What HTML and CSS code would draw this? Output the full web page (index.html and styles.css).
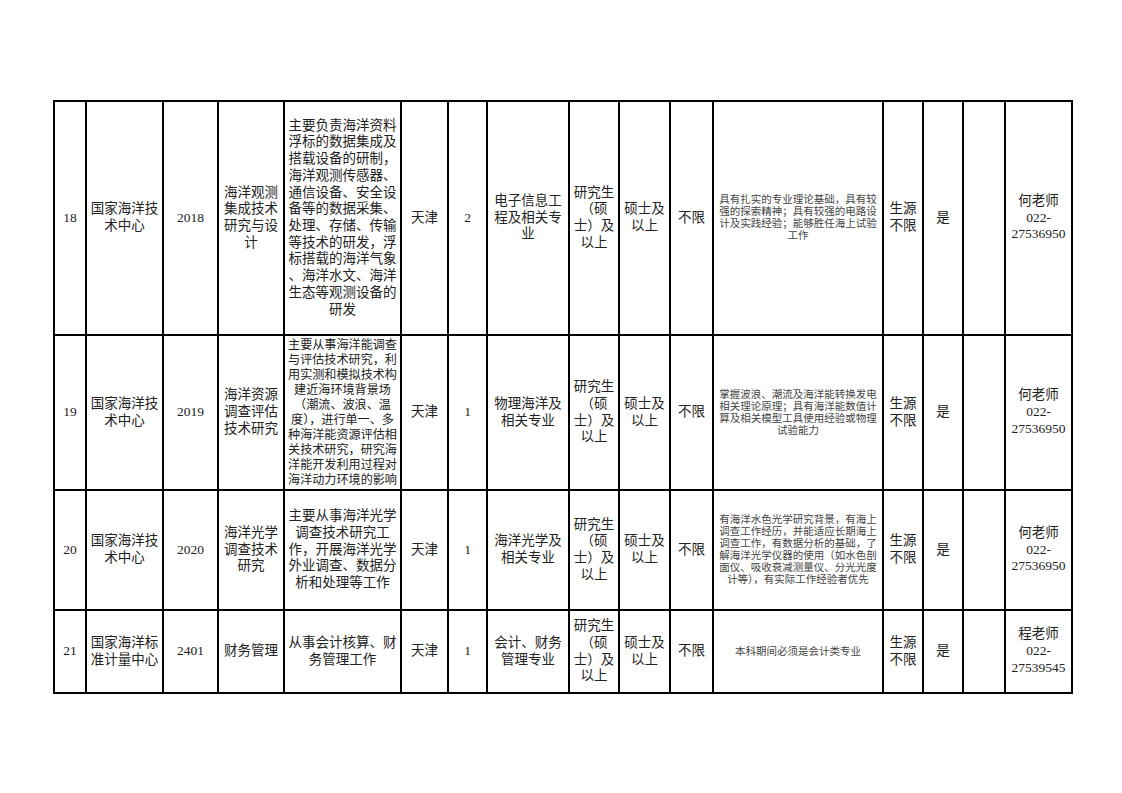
FILE: index.html
```html
<!DOCTYPE html>
<html lang="zh-CN">
<head>
<meta charset="utf-8">
<title>招聘岗位表</title>
<link rel="stylesheet" href="styles.css">
</head>
<body>
<div class="page">
<table class="sheet">
<colgroup>
<col class="c-no"><col class="c-unit"><col class="c-code"><col class="c-post"><col class="c-desc"><col class="c-place"><col class="c-num"><col class="c-major"><col class="c-edu"><col class="c-deg"><col class="c-age"><col class="c-req"><col class="c-src"><col class="c-yes"><col class="c-blank"><col class="c-contact">
</colgroup>
<tbody>
<tr class="r1">
<td>18</td>
<td>国家海洋技<br>术中心</td>
<td>2018</td>
<td>海洋观测<br>集成技术<br>研究与设<br>计</td>
<td class="desc">主要负责海洋资料<br>浮标的数据集成及<br>搭载设备的研制，<br>海洋观测传感器、<br>通信设备、安全设<br>备等的数据采集、<br>处理、存储、传输<br>等技术的研发，浮<br>标搭载的海洋气象<br>、海洋水文、海洋<br>生态等观测设备的<br>研发</td>
<td>天津</td>
<td>2</td>
<td>电子信息工<br>程及相关专<br>业</td>
<td>研究生<br>（硕<br>士）及<br>以上</td>
<td>硕士及<br>以上</td>
<td>不限</td>
<td class="small">具有扎实的专业理论基础，具有较<br>强的探索精神；具有较强的电路设<br>计及实践经验；能够胜任海上试验<br>工作</td>
<td>生源<br>不限</td>
<td>是</td>
<td></td>
<td>何老师<br>022-<br>27536950</td>
</tr>
<tr class="r2">
<td>19</td>
<td>国家海洋技<br>术中心</td>
<td>2019</td>
<td>海洋资源<br>调查评估<br>技术研究</td>
<td class="desc desc-sm">主要从事海洋能调查<br>与评估技术研究，利<br>用实测和模拟技术构<br>建近海环境背景场<br>（潮流、波浪、温<br>度），进行单一、多<br>种海洋能资源评估相<br>关技术研究，研究海<br>洋能开发利用过程对<br>海洋动力环境的影响</td>
<td>天津</td>
<td>1</td>
<td>物理海洋及<br>相关专业</td>
<td>研究生<br>（硕<br>士）及<br>以上</td>
<td>硕士及<br>以上</td>
<td>不限</td>
<td class="small">掌握波浪、潮流及海洋能转换发电<br>相关理论原理；具有海洋能数值计<br>算及相关模型工具使用经验或物理<br>试验能力</td>
<td>生源<br>不限</td>
<td>是</td>
<td></td>
<td>何老师<br>022-<br>27536950</td>
</tr>
<tr class="r3">
<td>20</td>
<td>国家海洋技<br>术中心</td>
<td>2020</td>
<td>海洋光学<br>调查技术<br>研究</td>
<td class="desc">主要从事海洋光学<br>调查技术研究工<br>作，开展海洋光学<br>外业调查、数据分<br>析和处理等工作</td>
<td>天津</td>
<td>1</td>
<td>海洋光学及<br>相关专业</td>
<td>研究生<br>（硕<br>士）及<br>以上</td>
<td>硕士及<br>以上</td>
<td>不限</td>
<td class="small">有海洋水色光学研究背景，有海上<br>调查工作经历，并能适应长期海上<br>调查工作，有数据分析的基础，了<br>解海洋光学仪器的使用（如水色剖<br>面仪、吸收衰减测量仪、分光光度<br>计等），有实际工作经验者优先</td>
<td>生源<br>不限</td>
<td>是</td>
<td></td>
<td>何老师<br>022-<br>27536950</td>
</tr>
<tr class="r4">
<td>21</td>
<td>国家海洋标<br>准计量中心</td>
<td>2401</td>
<td>财务管理</td>
<td class="desc">从事会计核算、财<br>务管理工作</td>
<td>天津</td>
<td>1</td>
<td>会计、财务<br>管理专业</td>
<td>研究生<br>（硕<br>士）及<br>以上</td>
<td>硕士及<br>以上</td>
<td>不限</td>
<td class="small">本科期间必须是会计类专业</td>
<td>生源<br>不限</td>
<td>是</td>
<td></td>
<td>程老师<br>022-<br>27539545</td>
</tr>
</tbody>
</table>
</div>
</body>
</html>
```

FILE: styles.css
```css
html, body {
  margin: 0;
  padding: 0;
  background: #fff;
}

.page {
  padding: 100px 0 0 53px;
}

.sheet {
  border-collapse: collapse;
  table-layout: fixed;
  width: 1018px;
  font-family: "Liberation Serif", "Noto Sans CJK SC", serif;
  font-size: 13.5px;
  font-weight: 400;
  line-height: 16.7px;
  color: #222;
}

.sheet td {
  border: 2px solid #000;
  padding: 0 2px;
  text-align: center;
  vertical-align: middle;
  white-space: nowrap;
  overflow: hidden;
}

.c-no { width: 32px; }
.c-unit { width: 77px; }
.c-code { width: 55px; }
.c-post { width: 66px; }
.c-desc { width: 117px; }
.c-place { width: 47px; }
.c-num { width: 39px; }
.c-major { width: 82px; }
.c-edu { width: 50px; }
.c-deg { width: 51px; }
.c-age { width: 43px; }
.c-req { width: 170px; }
.c-src { width: 40px; }
.c-yes { width: 40px; }
.c-blank { width: 42px; }
.c-contact { width: 67px; }

.r1 { height: 234px; }
.r2 { height: 155px; }
.r3 { height: 120px; }
.r4 { height: 83px; }

.sheet td.desc {
  padding: 0 1px;
}

.sheet td.desc-sm {
  font-size: 12.1px;
  line-height: 15px;
}

.sheet td.small {
  font-size: 10.5px;
  line-height: 12px;
  color: #444;
}
```
